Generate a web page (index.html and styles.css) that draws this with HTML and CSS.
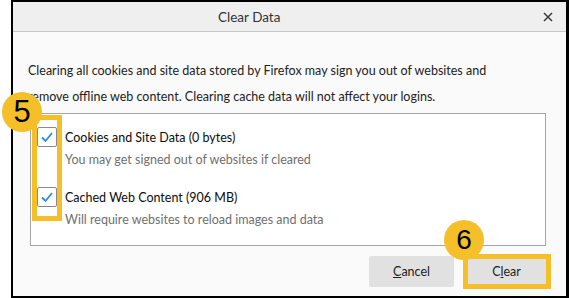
FILE: index.html
```html
<!DOCTYPE html>
<html>
<head>
<meta charset="utf-8">
<link rel="stylesheet" href="styles.css">
</head>
<body>
<div class="dialog">
  <div class="titlebar">
    <span class="title">Clear Data</span>
    <svg class="close" width="10" height="10" viewBox="0 0 10 10"><path d="M1 1 L9 9 M9 1 L1 9" stroke="#3a3a3a" stroke-width="1.5" fill="none"/></svg>
  </div>
  <div class="content">
    <p class="intro">Clearing all cookies and site data stored by Firefox may sign you out of websites and<br>remove offline web content. Clearing cache data will not affect your logins.</p>
    <div class="listbox">
      <div class="item">
        <div class="row">
          <span class="checkbox"><svg width="20" height="20" viewBox="0 0 20 20"><path d="M5 10.5 L8.5 14 L15 6" stroke="#2f8ae0" stroke-width="1.8" fill="none"/></svg></span>
          <span class="label">Cookies and Site Data (0 bytes)</span>
        </div>
        <div class="desc">You may get signed out of websites if cleared</div>
      </div>
      <div class="item">
        <div class="row">
          <span class="checkbox"><svg width="20" height="20" viewBox="0 0 20 20"><path d="M5 10.5 L8.5 14 L15 6" stroke="#2f8ae0" stroke-width="1.8" fill="none"/></svg></span>
          <span class="label">Cached Web Content (906 MB)</span>
        </div>
        <div class="desc">Will require websites to reload images and data</div>
      </div>
    </div>
    <div class="buttons">
      <button class="btn"><u>C</u>ancel</button>
      <button class="btn">C<u>l</u>ear</button>
    </div>
  </div>
</div>
<div class="mark-box box-checks"></div>
<div class="mark-box box-clear"></div>
<div class="badge badge-5">5</div>
<div class="badge badge-6">6</div>
</body>
</html>
```

FILE: styles.css
```css
html, body {
  margin: 0;
  padding: 0;
  background: #ffffff;
}
body {
  width: 569px;
  height: 298px;
  position: relative;
  overflow: hidden;
  font-family: Lato, "Open Sans", sans-serif;
}
.dialog {
  margin-left: 11px;
  width: 553px;
  height: 294px;
  border: 2px solid #000;
  border-right-width: 3px;
  background: #fafafa;
  display: flex;
  flex-direction: column;
}
.titlebar {
  height: 29px;
  background: #efefef;
  border-bottom: 1px solid #c6c6c6;
  display: flex;
  align-items: center;
}
.title {
  margin-left: 205px;
  font-size: 13.5px;
  color: #333;
}
.close {
  margin-left: auto;
  margin-right: 13px;
}
.content {
  flex: 1;
  display: flex;
  flex-direction: column;
  padding: 26px 20px 9px 15px;
}
.intro {
  margin: 0;
  font-size: 12.5px;
  line-height: 26px;
  color: #222;
}
.listbox {
  margin: 3px 0 0 2px;
  height: 118px;
  border: 1px solid #a6a6a6;
  background: #fff;
  padding: 13px 6px 0 6px;
  display: flex;
  flex-direction: column;
  gap: 18px;
}
.row {
  display: flex;
  align-items: center;
  height: 20px;
}
.checkbox {
  width: 18px;
  height: 18px;
  border: 1px solid #8a8a8a;
  border-radius: 2px;
  background: #fff;
  display: flex;
  align-items: center;
  justify-content: center;
  margin-right: 8px;
}
.checkbox svg {
  flex: none;
}
.label {
  font-size: 12.5px;
  color: #0c0c0d;
}
.desc {
  margin-left: 28px;
  margin-top: 4px;
  font-size: 12.5px;
  line-height: 18px;
  color: #6f6f6f;
}
.buttons {
  margin-top: auto;
  margin-right: -3px;
  display: flex;
  justify-content: flex-end;
  gap: 10px;
}
.btn {
  width: 85px;
  height: 31px;
  border: none;
  border-radius: 2px;
  background: #e1e1e1;
  font-family: Lato, "Open Sans", sans-serif;
  font-size: 12.5px;
  color: #222;
  padding: 0;
}
.mark-box {
  position: absolute;
  border: 5px solid #f5bf2a;
  box-sizing: border-box;
}
.box-checks {
  left: 32px;
  top: 115px;
  width: 30px;
  height: 106px;
}
.box-clear {
  left: 463px;
  top: 254px;
  width: 88px;
  height: 35px;
}
.badge {
  position: absolute;
  width: 40px;
  height: 40px;
  border-radius: 50%;
  background: #f5bf2a;
  color: #000;
  font-family: "Liberation Sans", Arial, sans-serif;
  display: flex;
  align-items: center;
  justify-content: center;
}
.badge-5 {
  left: 2px;
  top: 92px;
  font-size: 31px;
}
.badge-6 {
  left: 444px;
  top: 220px;
  font-size: 28px;
}
```
